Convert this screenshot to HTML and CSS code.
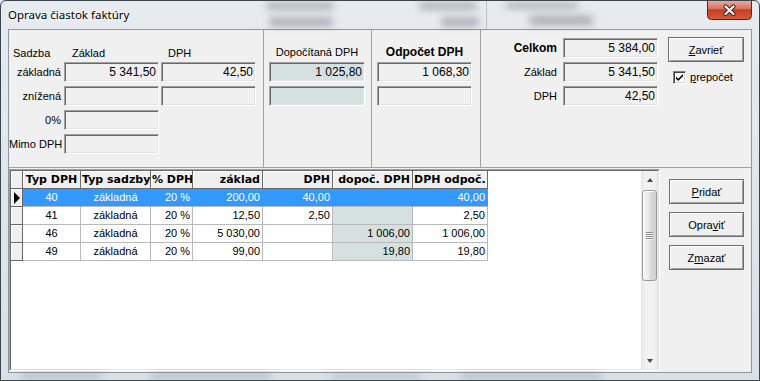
FILE: index.html
```html
<!DOCTYPE html>
<html lang="sk">
<head>
<meta charset="utf-8">
<title>Oprava čiastok faktúry</title>
<link rel="stylesheet" href="styles.css">
</head>
<body>
<div class="window">
  <div class="titlebar">
    <div class="blob b1"></div><div class="blob b2"></div><div class="blob b3"></div>
    <div class="blob b4"></div><div class="blob b5"></div><div class="blob b6"></div>
    <div class="vline"></div>
    <span class="title">Oprava čiastok faktúry</span>
    <div class="close">
      <svg width="45" height="20" viewBox="0 0 45 20">
        <defs>
          <linearGradient id="cg" x1="0" y1="0" x2="0" y2="1">
            <stop offset="0" stop-color="#eab2a5"/>
            <stop offset="0.45" stop-color="#d8715d"/>
            <stop offset="0.5" stop-color="#c53e26"/>
            <stop offset="1" stop-color="#d65a3e"/>
          </linearGradient>
        </defs>
        <path d="M0.5 0 V15.5 Q0.5 19.5 4.5 19.5 H40.5 Q44.5 19.5 44.5 15.5 V0" fill="url(#cg)" stroke="#5a2418"/>
        <path d="M18.5 6.5 L26.5 14 M26.5 6.5 L18.5 14" stroke="#4a1e15" stroke-width="4.2" stroke-linecap="round"/>
        <path d="M18.5 6.5 L26.5 14 M26.5 6.5 L18.5 14" stroke="#ffffff" stroke-width="2.2" stroke-linecap="round"/>
      </svg>
    </div>
  </div>

  <div class="client">
    <div class="top">
      <div class="panel p1">
        <span class="hcap cap-s">Sadzba</span>
        <span class="hcap cap-z">Základ</span>
        <span class="hcap cap-d">DPH</span>

        <span class="lbl">základná</span>
        <div class="field">5 341,50</div>
        <div class="field">42,50</div>

        <span class="lbl">znížená</span>
        <div class="field"></div>
        <div class="field"></div>

        <span class="lbl">0%</span>
        <div class="field"></div>
        <span></span>

        <span class="lbl">Mimo DPH</span>
        <div class="field"></div>
        <span></span>
      </div>

      <div class="panel p2">
        <span class="ccap">Dopočítaná DPH</span>
        <div class="field tint">1 025,80</div>
        <div class="field tint"></div>
      </div>

      <div class="panel p3">
        <span class="ccap bold">Odpočet DPH</span>
        <div class="field">1 068,30</div>
        <div class="field"></div>
      </div>

      <div class="panel p4">
        <div class="totals">
          <span class="lbl bold">Celkom</span>
          <div class="field">5 384,00</div>
          <span class="lbl">Základ</span>
          <div class="field">5 341,50</div>
          <span class="lbl">DPH</span>
          <div class="field">42,50</div>
        </div>
        <div class="side">
          <div class="btn wide"><span><u>Z</u>avrieť</span></div>
          <div class="chkrow">
            <span class="chk">
              <svg width="11" height="11" viewBox="0 0 11 11"><path d="M2 4.5 L4.2 6.8 L9 2 L9 4.2 L4.2 9 L2 6.8 Z" fill="#000"/></svg>
            </span>
            <span><u>p</u>repočet</span>
          </div>
        </div>
      </div>
    </div>

    <div class="bottom">
      <div class="gridbox">
        <div class="gridinner">
          <div class="grid">
            <div class="row hd">
              <div class="c ind"></div>
              <div class="c w-typ ctr">Typ DPH</div>
              <div class="c w-sad ctr">Typ sadzby</div>
              <div class="c w-pct ctr">% DPH</div>
              <div class="c w-zak rt">základ</div>
              <div class="c w-dph rt">DPH</div>
              <div class="c w-dop rt">dopoč. DPH</div>
              <div class="c w-odp rt">DPH odpoč.</div>
            </div>
            <div class="row sel">
              <div class="c ind"><span class="tri"></span></div>
              <div class="c w-typ ctr">40</div>
              <div class="c w-sad ctr">základná</div>
              <div class="c w-pct rt">20 %</div>
              <div class="c w-zak rt">200,00</div>
              <div class="c w-dph rt">40,00</div>
              <div class="c w-dop rt"></div>
              <div class="c w-odp rt">40,00</div>
            </div>
            <div class="row">
              <div class="c ind"></div>
              <div class="c w-typ ctr">41</div>
              <div class="c w-sad ctr">základná</div>
              <div class="c w-pct rt">20 %</div>
              <div class="c w-zak rt">12,50</div>
              <div class="c w-dph rt">2,50</div>
              <div class="c w-dop rt tint"></div>
              <div class="c w-odp rt">2,50</div>
            </div>
            <div class="row">
              <div class="c ind"></div>
              <div class="c w-typ ctr">46</div>
              <div class="c w-sad ctr">základná</div>
              <div class="c w-pct rt">20 %</div>
              <div class="c w-zak rt">5 030,00</div>
              <div class="c w-dph rt"></div>
              <div class="c w-dop rt tint">1 006,00</div>
              <div class="c w-odp rt">1 006,00</div>
            </div>
            <div class="row">
              <div class="c ind"></div>
              <div class="c w-typ ctr">49</div>
              <div class="c w-sad ctr">základná</div>
              <div class="c w-pct rt">20 %</div>
              <div class="c w-zak rt">99,00</div>
              <div class="c w-dph rt"></div>
              <div class="c w-dop rt tint">19,80</div>
              <div class="c w-odp rt">19,80</div>
            </div>
          </div>
          <div class="vscroll">
            <div class="sb-btn"><span class="arr-up"></span></div>
            <div class="thumb"><span class="grip"></span><span class="grip"></span><span class="grip"></span><span class="grip"></span></div>
            <div class="sb-space"></div>
            <div class="sb-btn"><span class="arr-down"></span></div>
          </div>
        </div>
      </div>
      <div class="btncol">
        <div class="btn"><span><u>P</u>ridať</span></div>
        <div class="btn"><span>Opra<u>v</u>iť</span></div>
        <div class="btn"><span>Z<u>m</u>azať</span></div>
      </div>
    </div>
  </div>

  <div class="framebottom">
    <div class="blob f1"></div><div class="blob f2"></div><div class="blob f3"></div><div class="blob f4"></div>
  </div>
</div>
</body>
</html>
```

FILE: styles.css
```css
html, body {
  margin: 0;
  padding: 0;
}
body {
  width: 760px;
  height: 381px;
  overflow: hidden;
  font-family: "Liberation Sans", Arial, sans-serif;
  font-size: 11px;
  color: #000;
  background: #dfe5ec;
}

.window {
  position: relative;
  box-sizing: border-box;
  width: 760px;
  height: 381px;
  border: 1px solid #3c444c;
  border-radius: 6px 6px 0 0;
  background: linear-gradient(180deg, #e7ebef 0%, #dee4ea 60%, #d9dfe6 100%);
  display: flex;
  flex-direction: column;
  overflow: hidden;
}

/* title bar */
.titlebar {
  position: relative;
  height: 28px;
  flex: none;
  display: flex;
  align-items: flex-start;
}
.title {
  position: relative;
  margin: 6px 0 0 7px;
  font-family: "Noto Sans", "Open Sans", sans-serif;
  font-size: 11.5px;
  line-height: 16px;
  color: #000;
  text-shadow: 0 0 6px #fff, 0 0 3px #fff;
}
.close {
  position: relative;
  margin-left: auto;
  margin-right: 7px;
  margin-top: -1px;
  width: 45px;
  height: 20px;
}
.close svg { display: block; }

.blob {
  position: absolute;
  background: rgba(70, 75, 80, 0.32);
  filter: blur(3.5px);
  border-radius: 4px;
}
.b1 { left: 265px; top: 1px; width: 68px; height: 8px; }
.b2 { left: 268px; top: 16px; width: 64px; height: 10px; }
.b3 { left: 418px; top: 1px; width: 58px; height: 8px; }
.b4 { left: 440px; top: 16px; width: 38px; height: 10px; }
.b5 { left: 505px; top: 1px; width: 72px; height: 7px; }
.b6 { left: 528px; top: 14px; width: 64px; height: 11px; }
.vline {
  position: absolute;
  left: 485px;
  top: 0;
  width: 1px;
  height: 28px;
  background: rgba(90, 95, 100, 0.3);
}

/* client */
.client {
  margin: 0 7px;
  box-sizing: border-box;
  height: 344px;
  flex: none;
  border: 1px solid #8d98a3;
  background: #f0f0f0;
  display: flex;
  flex-direction: column;
}

.top {
  display: flex;
  height: 138px;
  flex: none;
  box-sizing: border-box;
  border-bottom: 1px solid #a0a0a0;
}
.panel {
  box-sizing: border-box;
  height: 100%;
  border-right: 1px solid #a0a0a0;
}
.p1 {
  width: 255px;
  padding-top: 17px;
  display: grid;
  grid-template-columns: 53px 95px 95px;
  grid-template-rows: 11px 20px 20px 20px 20px;
  column-gap: 2px;
  row-gap: 4px;
  align-content: start;
}
.p2 { width: 108px; }
.p3 { width: 109px; }
.p2, .p3 {
  padding: 16px 0 0 5px;
  display: flex;
  flex-direction: column;
  gap: 4px;
}
.p2 .field { width: 96px; }
.p3 .field { width: 95px; }
.p2 .ccap { width: 96px; }
.p3 .ccap { width: 95px; }

.p4 {
  flex: 1;
  border-right: none;
  padding-top: 8px;
  display: flex;
  align-items: flex-start;
}

.hcap {
  line-height: 12px;
  white-space: nowrap;
}
.cap-s { padding-left: 4px; }
.cap-z { padding-left: 8px; }
.cap-d { padding-left: 7px; }

.ccap {
  height: 12px;
  line-height: 12px;
  text-align: center;
  white-space: nowrap;
}
.bold {
  font-weight: bold;
  font-size: 12px;
}

.lbl {
  line-height: 20px;
  text-align: right;
  padding-right: 1px;
  white-space: nowrap;
}

.field {
  box-sizing: border-box;
  height: 20px;
  border: 1px solid;
  border-color: #a0a0a0 #ffffff #ffffff #a0a0a0;
  box-shadow: inset 1px 1px 0 #696969, inset -1px -1px 0 #e3e3e3;
  background: #f0f0f0;
  text-align: right;
  padding: 0 2px 0 0;
  font-size: 12px;
  line-height: 18px;
  white-space: nowrap;
}
.field.tint { background: #d5e1e1; }

.totals {
  display: grid;
  grid-template-columns: 77px 95px;
  grid-auto-rows: 20px;
  column-gap: 5px;
  row-gap: 4px;
}
.side {
  margin-left: 10px;
  margin-top: -1px;
  display: flex;
  flex-direction: column;
}
.chkrow {
  margin-top: 9px;
  margin-left: 5px;
  display: flex;
  align-items: center;
  gap: 4px;
  line-height: 13px;
}
.chk {
  box-sizing: border-box;
  width: 13px;
  height: 13px;
  border: 1px solid;
  border-color: #808080 #ffffff #ffffff #808080;
  box-shadow: inset 1px 1px 0 #404040, inset -1px -1px 0 #d4d4d4;
  background: #fff;
  display: flex;
  align-items: center;
  justify-content: center;
}
.chk svg { display: block; }

.btn {
  box-sizing: border-box;
  width: 75px;
  height: 25px;
  border: 1px solid #6e6e6e;
  background: #f0f0f0;
  box-shadow: inset 1px 1px 0 #ffffff, inset -1px -1px 0 #a0a0a0;
  display: flex;
  align-items: center;
  justify-content: center;
  font-size: 11px;
}
.btn.wide { width: 76px; }

/* bottom area */
.bottom {
  flex: 1;
  display: flex;
  align-items: flex-start;
}
.gridbox {
  margin-top: 1px;
  box-sizing: border-box;
  width: 651px;
  height: 202px;
  border: 1px solid;
  border-color: #a0a0a0 #ffffff #ffffff #a0a0a0;
}
.gridinner {
  box-sizing: border-box;
  height: 100%;
  border: 1px solid;
  border-color: #696969 #e3e3e3 #e3e3e3 #696969;
  background: #ffffff;
  display: flex;
}
.grid {
  flex: 1;
}
.row {
  display: flex;
  height: 18px;
}
.c {
  box-sizing: border-box;
  height: 18px;
  flex: none;
  border-right: 1px solid #b9b9b9;
  border-bottom: 1px solid #b9b9b9;
  padding: 0 2px;
  line-height: 17px;
  white-space: nowrap;
  overflow: hidden;
}
.ind {
  width: 12px;
  padding: 0;
  background: #f0f0f0;
  border-color: #696969;
  box-shadow: inset 1px 1px 0 #ffffff;
  display: flex;
  align-items: center;
}
.w-typ { width: 58px; }
.w-sad { width: 70px; }
.w-pct { width: 42px; }
.w-zak { width: 70px; }
.w-dph { width: 70px; }
.w-dop { width: 80px; }
.w-odp { width: 75px; }
.ctr { text-align: center; }
.rt { text-align: right; }

.hd .c {
  background: #f0f0f0;
  border-color: #696969;
  box-shadow: inset 1px 1px 0 #ffffff;
  font-family: "DejaVu Sans", Verdana, sans-serif;
  font-weight: bold;
  font-size: 11px;
  padding: 0 1px;
}
.hd .rt { padding-right: 2px; }

.tint { background: #d5e1e1; }

.sel .c:not(.ind) {
  background: #3399ff;
  color: #ffffff;
  border-right-color: #3399ff;
}
.tri {
  margin-left: 3px;
  width: 0;
  height: 0;
  border-top: 6px solid transparent;
  border-bottom: 6px solid transparent;
  border-left: 6px solid #000;
}

/* scrollbar */
.vscroll {
  width: 17px;
  flex: none;
  display: flex;
  flex-direction: column;
  background: linear-gradient(90deg, #e4e4e4 0%, #f2f2f2 25%, #f2f2f2 75%, #e8e8e8 100%);
}
.sb-btn {
  height: 17px;
  flex: none;
  display: flex;
  align-items: center;
  justify-content: center;
}
.arr-up {
  width: 0;
  height: 0;
  border-left: 3.5px solid transparent;
  border-right: 3.5px solid transparent;
  border-bottom: 4px solid #4a4a4a;
}
.arr-down {
  width: 0;
  height: 0;
  border-left: 3.5px solid transparent;
  border-right: 3.5px solid transparent;
  border-top: 4px solid #4a4a4a;
}
.thumb {
  margin: 2px 1px 0 1px;
  box-sizing: border-box;
  height: 91px;
  flex: none;
  border: 1px solid #9a9a9a;
  border-radius: 3px;
  background: linear-gradient(90deg, #f4f4f4 0%, #e9e9e9 45%, #dadada 55%, #d2d2d2 100%);
  box-shadow: inset 1px 1px 0 #ffffff;
  display: flex;
  flex-direction: column;
  align-items: center;
  justify-content: center;
  gap: 1px;
}
.grip {
  width: 7px;
  height: 1px;
  background: #8a8a8a;
  box-shadow: 0 1px 0 #f8f8f8;
}
.sb-space { flex: 1; }

.btncol {
  padding: 11px 0 0 9px;
  display: flex;
  flex-direction: column;
  gap: 8px;
}

/* bottom frame */
.framebottom {
  position: relative;
  flex: 1;
}
.f1 { left: 20px; top: 1px; width: 80px; height: 4px; }
.f2 { left: 150px; top: 1px; width: 120px; height: 4px; }
.f3 { left: 330px; top: 2px; width: 90px; height: 3px; }
.f4 { left: 460px; top: 1px; width: 140px; height: 4px; }
```
